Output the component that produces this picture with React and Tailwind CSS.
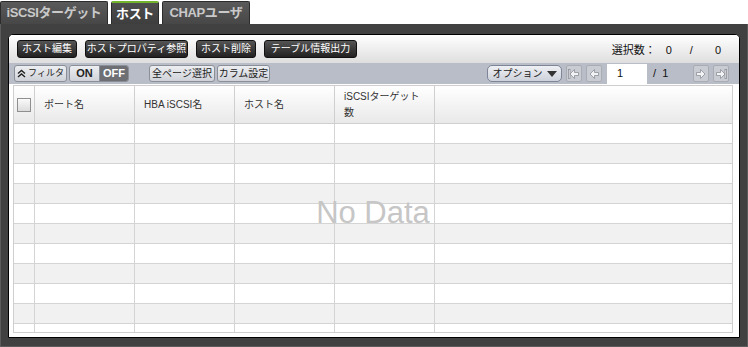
import React from 'react';

const font = "font-['Liberation_Sans','Noto_Sans_CJK_JP',sans-serif]";

function Tab({ label, active, width }) {
  return (
    <div
      className={`${width} h-[23px] flex items-center justify-center whitespace-nowrap text-[13px] tracking-[-0.4px] font-bold rounded-t-[2px] border border-b-0 ${
        active
          ? 'bg-gradient-to-b from-[#4e4e4e] to-[#3e3e3e] text-white border-[#2c2c2c] border-t-2 border-t-[#72b52c]'
          : 'bg-gradient-to-b from-[#5a5a5a] to-[#474747] text-[#c9c9c9] border-[#2c2c2c]'
      }`}
    >
      {label}
    </div>
  );
}

function DarkButton({ children, width }) {
  return (
    <button className={`${width} h-[18px] whitespace-nowrap text-[10px] text-white rounded-[3px] border border-[#111] bg-gradient-to-b from-[#555] to-[#222] leading-none`}>
      {children}
    </button>
  );
}

function LightButton({ children, className = '' }) {
  return (
    <button className={`h-[17px] whitespace-nowrap text-[10px] text-[#222] rounded-[3px] border border-[#8b8f98] bg-gradient-to-b from-[#eceef1] to-[#cfd2d8] leading-none ${className}`}>
      {children}
    </button>
  );
}

function NavButton({ children }) {
  return (
    <div className="w-[16px] h-[17px] rounded-[2px] border border-[#a9acb3] bg-[#c9ccd2] flex items-center justify-center">
      {children}
    </div>
  );
}

function Arrow({ dir, bar }) {
  const flip = dir === 'left' ? 'scale(-1,1) translate(-12,0)' : undefined;
  return (
    <svg width="12" height="12" viewBox="0 0 12 12">
      <g transform={flip} fill="#f2f3f5" stroke="#8d9098" strokeWidth="0.8">
        <path d="M1.5 4.5h4V1.5l4.5 4.5-4.5 4.5V7.5h-4z" />
        {bar && <rect x="10" y="1.5" width="1.6" height="9" />}
      </g>
    </svg>
  );
}

const columns = [
  'ポート名',
  'HBA iSCSI名',
  'ホスト名',
  <>iSCSIターゲット<br />数</>,
];

export default function App() {
  const rows = Array.from({ length: 11 });
  return (
    <div className={`w-[748px] h-[347px] bg-white flex flex-col overflow-hidden ${font}`}>
      <div className="h-[24px] flex items-end gap-[3px] pt-[1px]">
        <Tab label="iSCSIターゲット" width="w-[108px]" />
        <Tab label="ホスト" width="w-[48px]" active />
        <Tab label="CHAPユーザ" width="w-[88px]" />
      </div>
      <div className="flex-1 min-h-0 bg-[#414141] border-x border-b border-[#5c5c5c] px-[7px] pt-[10px] pb-[8px] flex flex-col">
        <div className="flex-1 min-h-0 flex flex-col border border-black rounded-t-[5px] bg-white overflow-hidden">
          <div className="h-[28px] shrink-0 flex items-start pt-[5px] pl-[8px] pr-[18px] bg-gradient-to-b from-[#ffffff] to-[#dedede]">
            <div className="flex gap-[8px]">
              <DarkButton width="w-[60px]">ホスト編集</DarkButton>
              <DarkButton width="w-[103px]">ホストプロパティ参照</DarkButton>
              <DarkButton width="w-[60px]">ホスト削除</DarkButton>
              <DarkButton width="w-[93px]">テーブル情報出力</DarkButton>
            </div>
            <div className="ml-auto mt-[2px] text-[11px] text-[#111] flex">
              <span>選択数：</span>
              <span className="ml-[10px]">0</span>
              <span className="ml-[18px]">/</span>
              <span className="ml-[22px]">0</span>
            </div>
          </div>
          <div className="h-[21px] shrink-0 bg-[#b9bdc7] flex items-center pl-[5px] pr-[10px]">
            <LightButton className="w-[53px] flex items-center justify-center gap-[2px]">
              <svg width="9" height="9" viewBox="0 0 9 9">
                <path d="M1 4.5l3.5-3 3.5 3M1 8l3.5-3 3.5 3" fill="none" stroke="#222" strokeWidth="1.4" />
              </svg>
              <span className="text-[9px]">フィルタ</span>
            </LightButton>
            <div className="ml-[2px] h-[17px] flex rounded-[3px] border border-[#8b8f98] overflow-hidden text-[11px] font-bold">
              <span className="w-[29px] flex items-center justify-center bg-gradient-to-b from-[#eceef1] to-[#cfd2d8] text-[#222]">ON</span>
              <span className="w-[29px] flex items-center justify-center bg-[#6d6f74] text-white border-l border-[#8b8f98]">OFF</span>
            </div>
            <LightButton className="ml-[20px] w-[66px]">全ページ選択</LightButton>
            <LightButton className="ml-[2px] w-[53px]">カラム設定</LightButton>
            <button className="ml-auto h-[17px] w-[75px] rounded-[5px] border border-[#7d8597] bg-gradient-to-b from-[#eef0f4] to-[#cdd1da] text-[10px] text-[#222] flex items-center justify-center gap-[4px]">
              オプション
              <svg width="10" height="6" viewBox="0 0 10 6"><path d="M0 0h10L5 6z" fill="#333" /></svg>
            </button>
            <div className="ml-[4px] flex gap-[4px]">
              <NavButton><Arrow dir="left" bar /></NavButton>
              <NavButton><Arrow dir="left" /></NavButton>
            </div>
            <div className="ml-[5px] w-[40px] h-[20px] bg-white text-[11px] text-[#111] flex items-center pl-[10px]">1</div>
            <span className="ml-[6px] text-[11px] text-[#111] w-[36px]">/ &nbsp;1</span>
            <div className="ml-[4px] flex gap-[4px]">
              <NavButton><Arrow dir="right" /></NavButton>
              <NavButton><Arrow dir="right" bar /></NavButton>
            </div>
          </div>
          <div className="flex-1 min-h-0 pt-[1px] pl-[4px] pr-[6px] pb-[4px]">
            <div className="relative h-full border border-[#cfcfcf] overflow-hidden">
              <div className="flex h-[38px] bg-gradient-to-b from-[#ffffff] to-[#e9e9e9] border-b border-[#cfcfcf] text-[10px] text-[#333]">
                <div className="w-[21px] border-r border-[#cfcfcf] flex items-center justify-center">
                  <div className="w-[14px] h-[14px] border border-[#8f8f8f] bg-gradient-to-b from-[#fafafa] to-[#dcdcdc]" />
                </div>
                {columns.map((c, i) => (
                  <div key={i} className="w-[100px] border-r border-[#cfcfcf] flex items-center pl-[9px] pr-[4px] leading-[16px] whitespace-nowrap">
                    <span>{c}</span>
                  </div>
                ))}
                <div className="flex-1" />
              </div>
              {rows.map((_, i) => (
                <div key={i} className={`flex h-[20px] border-b border-[#d4d4d4] ${i % 2 ? 'bg-[#f1f1f1]' : 'bg-white'}`}>
                  <div className="w-[21px] border-r border-[#d4d4d4]" />
                  <div className="w-[100px] border-r border-[#d4d4d4]" />
                  <div className="w-[100px] border-r border-[#d4d4d4]" />
                  <div className="w-[100px] border-r border-[#d4d4d4]" />
                  <div className="w-[100px] border-r border-[#d4d4d4]" />
                  <div className="flex-1" />
                </div>
              ))}
              <div className="absolute left-0 right-0 top-[104px] text-center text-[31px] text-[#c6c6c6] font-['Liberation_Sans',sans-serif]">
                No Data
              </div>
            </div>
          </div>
        </div>
      </div>
    </div>
  );
}
